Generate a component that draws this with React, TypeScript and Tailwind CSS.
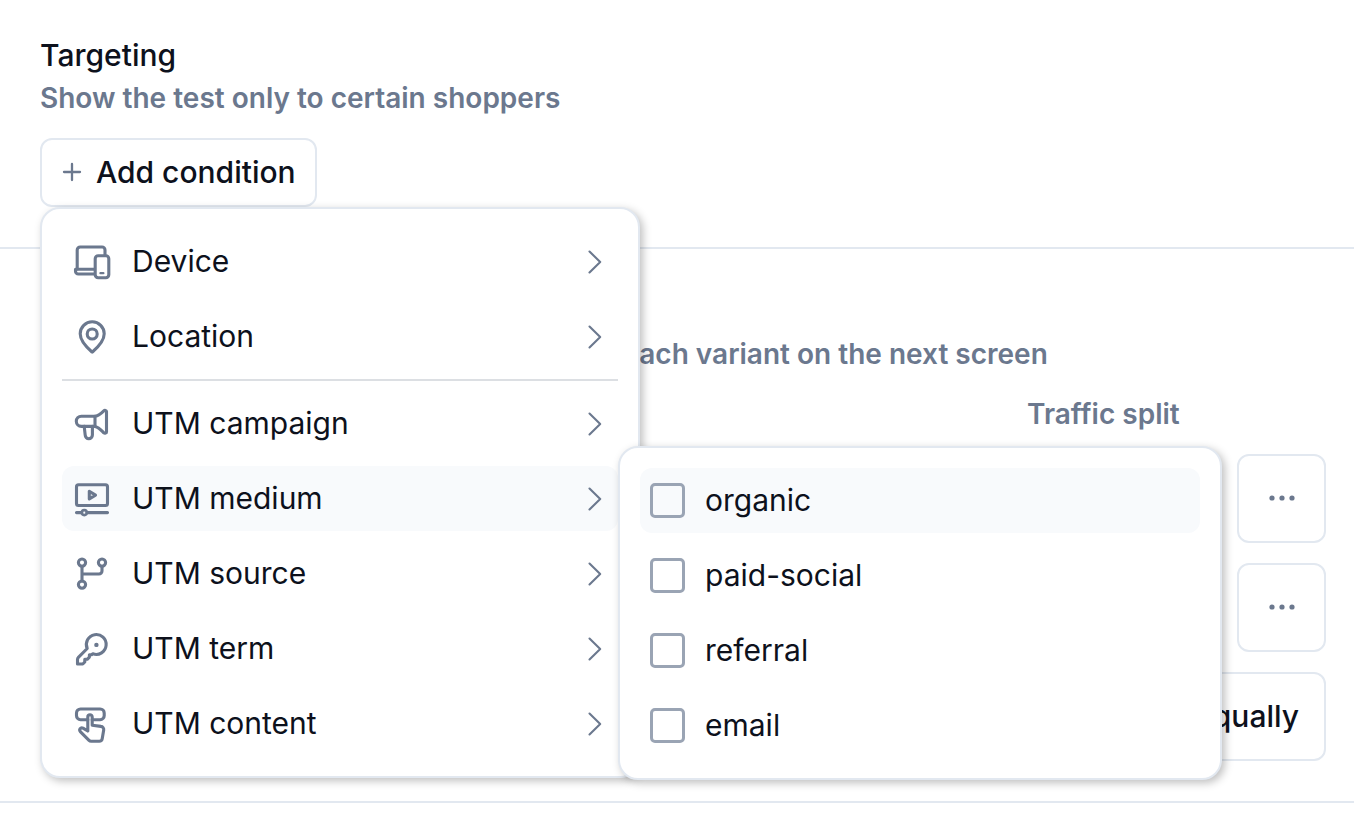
import type { ReactNode } from 'react'

const strokeProps = {
  width: 36,
  height: 36,
  viewBox: '0 0 36 36',
  fill: 'none',
  stroke: 'currentColor',
  strokeWidth: 3.1,
  strokeLinecap: 'round',
  strokeLinejoin: 'round',
  'aria-hidden': true,
  className: 'shrink-0 overflow-visible text-[#6b788e]',
} as const

const DeviceIcon = () => (
  <svg {...strokeProps}>
    <path d="M3.2 25V6a3 3 0 0 1 3-3H28a3 3 0 0 1 3 3v5" />
    <path d="M20 25.2H1.5v2A2.8 2.8 0 0 0 4.3 30H20" />
    <rect x="21.2" y="11.7" width="13.6" height="22" rx="3" />
    <path d="M26.4 29.2h3" strokeWidth="2.2" />
  </svg>
)

const LocationIcon = () => (
  <svg {...strokeProps}>
    <path d="M18.2 33.2C14.5 30 6.2 23 6.2 14.8a12 12 0 0 1 24 0c0 8.200-8.300 15.200-12 18.400z" />
    <circle cx="18.2" cy="15" r="5" />
  </svg>
)

const CampaignIcon = () => (
  <svg {...strokeProps}>
    <path d="M21 10.200H7.400a5.100 5.100 0 0 0 0 10.200H21z" />
    <path d="M21 10.200c4-.7 6.300-2.900 8.800-5.400.9-.8 2.700-.4 2.700.8v20.300c0 1.200-1.700 1.700-2.700.9-2.500-2.500-4.800-5.500-8.800-6.400" />
    <path d="M10.200 20.400l1 8.700a3.600 3.600 0 0 0 7.200 0v-8.700" />
  </svg>
)

const MediumIcon = () => (
  <svg {...strokeProps}>
    <rect x="2.5" y="3.8" width="31" height="20.7" rx="2" />
    <path d="M15.300 10.300v7.600l6.200-3.800z" />
    <path d="M2.500 31.600h5.200M13 31.600h20.500" />
    <circle cx="10.3" cy="31.6" r="2.5" strokeWidth="2.6" />
  </svg>
)

const SourceIcon = () => (
  <svg {...strokeProps}>
    <circle cx="8" cy="6.6" r="3.6" />
    <circle cx="28" cy="6.6" r="3.6" />
    <circle cx="8" cy="28.6" r="3.6" />
    <path d="M8 10.200v14.800M28 10.200v4.800a3 3 0 0 1-3 3H8" />
  </svg>
)

const TermIcon = () => (
  <svg {...strokeProps}>
    <path d="M13.200 17.500L4.400 26.300a3 3 0 0 0-.9 2.100V33h5.300l2-2v-2.700h2.400l2.200-2.200v-2.300h2.200l1.300-1a9.900 9.900 0 1 0-5.700-5.300z" />
    <circle cx="22.4" cy="13.9" r="2.2" fill="currentColor" stroke="none" />
  </svg>
)

const ContentIcon = () => (
  <svg {...strokeProps}>
    <path d="M13.800 13.700H6.500a4 4 0 0 1-4-4V7a4 4 0 0 1 4-4h19.700a4 4 0 0 1 4 4v2.700a4 4 0 0 1-4 4h-8" />
    <path d="M13.800 25V10.900a2.200 2.200 0 0 1 4.400 0v8.300l8.700 1.200a3.200 3.200 0 0 1 2.800 3.700l-1.500 8.700a3 3 0 0 1-3 2.500h-8a3 3 0 0 1-2.200-.9l-8.700-8.800c-1.600-2 .2-4.500 2.700-3.500z" />
  </svg>
)

const ChevronIcon = () => (
  <svg
    width="14"
    height="24"
    viewBox="0 0 14 24"
    fill="none"
    stroke="currentColor"
    strokeWidth="2.1"
    strokeLinecap="round"
    strokeLinejoin="round"
    aria-hidden="true"
    className="ml-auto shrink-0 text-[#6b788e]"
  >
    <path d="M1.5 1.5L12.2 12 1.5 22.500" />
  </svg>
)

const PlusIcon = () => (
  <svg
    width="20"
    height="20"
    viewBox="0 0 20 20"
    stroke="currentColor"
    strokeWidth="2.3"
    strokeLinecap="round"
    aria-hidden="true"
    className="shrink-0 text-[#6b788e]"
  >
    <path d="M10 2v16M2 10h16" />
  </svg>
)

const mediums = ['organic', 'paid-social', 'referral', 'email']

const panel =
  'absolute flex flex-col gap-[10px] rounded-[20px] border-2 border-[#e2e8f0] bg-white p-5 shadow-[3px_3px_8px_rgba(0,0,0,0.25)]'

function MediumMenu() {
  return (
    <div role="group" aria-label="UTM medium" className={`${panel} -top-5 left-full z-20 w-[604px]`}>
      {mediums.map((name, i) => (
        <label
          key={name}
          className={`flex h-[65px] items-center gap-5 rounded-xl px-[10px] ${i === 0 ? 'bg-[#f8fafc]' : ''}`}
        >
          <input
            type="checkbox"
            name={name}
            className="size-[35px] shrink-0 appearance-none rounded-[5px] border-3 border-[#9aa4b4] checked:bg-[#9aa4b4]"
          />
          <span className="pb-0.5">{name}</span>
        </label>
      ))}
    </div>
  )
}

function MenuItem({ icon, label, active, children }: { icon: ReactNode; label: string; active?: boolean; children?: ReactNode }) {
  return (
    <div className="relative">
      <button
        type="button"
        aria-expanded={!!active}
        className={`flex h-[65px] w-full items-center gap-[22px] rounded-xl pr-4 pl-3 text-left ${active ? 'bg-[#f8fafc]' : ''}`}
      >
        {icon}
        <span className="pb-0.5">{label}</span>
        <ChevronIcon />
      </button>
      {children}
    </div>
  )
}

function ConditionMenu() {
  return (
    <div className={`${panel} top-full left-0 z-10 w-[600px]`}>
      <MenuItem icon={<DeviceIcon />} label="Device" />
      <MenuItem icon={<LocationIcon />} label="Location" />
      <hr className="border-t-2 border-[#dcdfe3]" />
      <MenuItem icon={<CampaignIcon />} label="UTM campaign" />
      <MenuItem icon={<MediumIcon />} label="UTM medium" active>
        <MediumMenu />
      </MenuItem>
      <MenuItem icon={<SourceIcon />} label="UTM source" />
      <MenuItem icon={<TermIcon />} label="UTM term" />
      <MenuItem icon={<ContentIcon />} label="UTM content" />
    </div>
  )
}

function VariantRow({ name, split }: { name: string; split: string }) {
  return (
    <div className="flex gap-5">
      <input
        aria-label="Variant name"
        defaultValue={name}
        className="h-[89px] min-w-0 flex-1 rounded-xl border-2 border-[#e2e8f0] px-5"
      />
      <input
        aria-label="Traffic split"
        defaultValue={split}
        className="h-[89px] w-[189px] rounded-xl border-2 border-[#e2e8f0] px-5"
      />
      <button
        type="button"
        aria-label={`More options for ${name}`}
        className="flex size-[89px] shrink-0 items-center justify-center rounded-xl border-2 border-[#e2e8f0] pb-0.5 text-[#6b788e]"
      >
        <svg width="28" height="8" viewBox="0 0 28 8" fill="currentColor" aria-hidden="true">
          <circle cx="4" cy="4" r="2.6" />
          <circle cx="14" cy="4" r="2.6" />
          <circle cx="24" cy="4" r="2.6" />
        </svg>
      </button>
    </div>
  )
}

export default function App() {
  return (
    <main className="bg-white font-['Inter',sans-serif] text-[30px] leading-11 text-[#0d111c]">
      <section className="border-b-2 border-[#e2e8f0] pt-[33px] pr-7 pb-10 pl-10">
        <h2 className="font-medium">Targeting</h2>
        <p className="text-[28px] leading-[42px] font-semibold text-[#6b788e]">Show the test only to certain shoppers</p>
        <div className="relative mt-[19px] w-fit">
          <button
            type="button"
            aria-expanded="true"
            className="flex h-[69px] items-center gap-[14px] rounded-xl border-2 border-[#e2e8f0] pr-[19px] pb-0.5 pl-5 font-medium"
          >
            <PlusIcon />
            Add condition
          </button>
          <ConditionMenu />
        </div>
      </section>

      <section className="border-b-2 border-[#e2e8f0] pt-10 pr-7 pb-10 pl-10">
        <h2 className="font-medium">Variants</h2>
        <p className="text-[28px] leading-[42px] font-semibold text-[#6b788e]">
          Add the variants to test. You can configure each variant on the next screen
        </p>
        <div className="mt-[19px] flex gap-5 text-[28px] leading-10 font-semibold text-[#6b788e]">
          <span className="flex-1">Name</span>
          <span className="w-[299px]">Traffic split</span>
        </div>
        <div className="mt-5 flex flex-col gap-5">
          <VariantRow name="Control" split="50%" />
          <VariantRow name="Variant 1" split="50%" />
          <button
            type="button"
            className="h-[89px] self-end rounded-xl border-2 border-[#e2e8f0] px-[25px] pb-0.5 font-medium"
          >
            Split equally
          </button>
        </div>
      </section>
    </main>
  )
}
